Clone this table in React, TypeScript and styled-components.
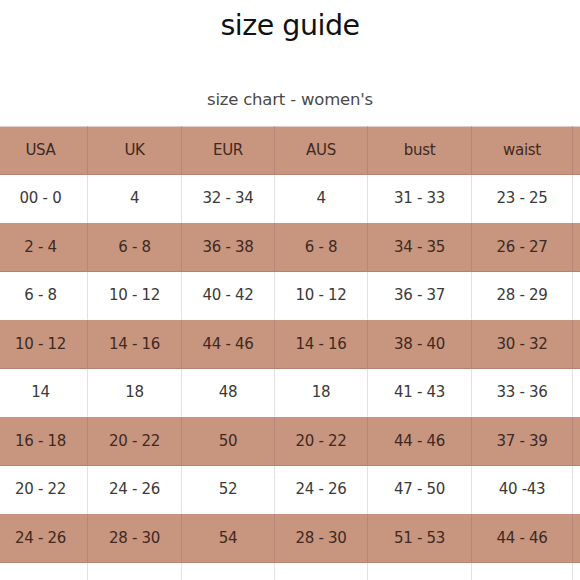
import styled, { createGlobalStyle } from 'styled-components';

const GlobalStyle = createGlobalStyle`
  html, body {
    margin: 0;
    padding: 0;
    background: #ffffff;
    overflow: hidden;
  }
`;

// last column runs off the right edge, only its border shows
const columns = ['USA', 'UK', 'EUR', 'AUS', 'bust', 'waist', ''];
const widths = [94, 94, 93, 93, 104, 101, 100];

const rows = [
  ['00 - 0', '4', '32 - 34', '4', '31 - 33', '23 - 25', ''],
  ['2 - 4', '6 - 8', '36 - 38', '6 - 8', '34 - 35', '26 - 27', ''],
  ['6 - 8', '10 - 12', '40 - 42', '10 - 12', '36 - 37', '28 - 29', ''],
  ['10 - 12', '14 - 16', '44 - 46', '14 - 16', '38 - 40', '30 - 32', ''],
  ['14', '18', '48', '18', '41 - 43', '33 - 36', ''],
  ['16 - 18', '20 - 22', '50', '20 - 22', '44 - 46', '37 - 39', ''],
  ['20 - 22', '24 - 26', '52', '24 - 26', '47 - 50', '40 -43', ''],
  ['24 - 26', '28 - 30', '54', '28 - 30', '51 - 53', '44 - 46', ''],
  ['', '', '', '', '', '', ''],
];

const Page = styled.div`
  width: 580px;
  height: 580px;
  overflow: hidden;
  font-family: 'DejaVu Sans', 'Liberation Sans', sans-serif;
`;

const Title = styled.h1`
  margin: 0;
  padding-top: 9px;
  height: 80px;
  box-sizing: border-box;
  text-align: center;
  font-size: 28.5px;
  font-weight: 400;
  color: #111111;
  letter-spacing: -0.5px;
`;

const Subtitle = styled.div`
  height: 46px;
  box-sizing: border-box;
  padding-top: 10px;
  text-align: center;
  font-size: 16.5px;
  color: #4a4a4a;
  letter-spacing: -0.2px;
`;

const Grid = styled.div`
  display: grid;
  grid-template-columns: ${widths.map((w) => `${w}px`).join(' ')};
  margin-left: -6px;
  width: max-content;
`;

const Cell = styled.div<{ $tan: boolean; $header?: boolean }>`
  height: 48.5px;
  box-sizing: border-box;
  display: flex;
  align-items: center;
  justify-content: center;
  font-size: 15px;
  letter-spacing: -0.3px;
  background: ${(p) => (p.$tan ? '#c8957f' : '#ffffff')};
  color: ${(p) => (p.$tan ? '#3e2a22' : '#3a3a3a')};
  border-right: 1px solid ${(p) => (p.$tan ? '#b9877a' : '#e4e0de')};
  border-bottom: 1px solid ${(p) => (p.$tan ? '#b38270' : 'transparent')};
  border-top: ${(p) => (p.$header ? '1px solid #e2cfc7' : 'none')};
`;

export default function App() {
  return (
    <Page>
      <GlobalStyle />
      <Title>size guide</Title>
      <Subtitle>size chart - women's</Subtitle>
      <Grid>
        {columns.map((c, j) => (
          <Cell key={`h-${j}`} $tan $header>
            {c}
          </Cell>
        ))}
        {rows.map((row, i) =>
          row.map((v, j) => (
            <Cell key={`${i}-${j}`} $tan={i % 2 === 1}>
              {v}
            </Cell>
          ))
        )}
      </Grid>
    </Page>
  );
}
